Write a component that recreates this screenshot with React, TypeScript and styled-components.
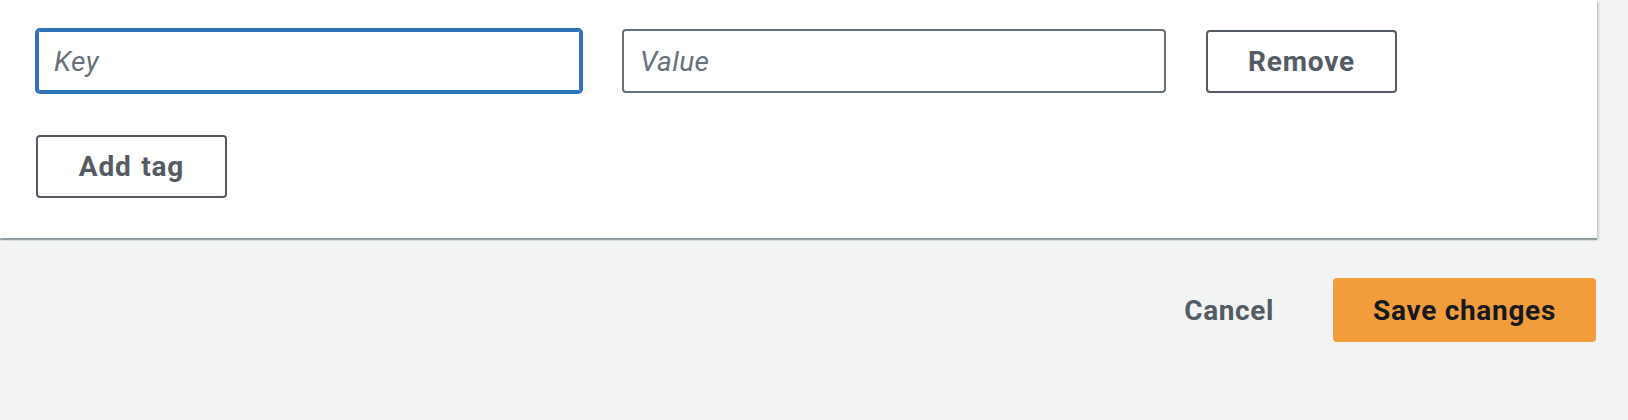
import React from "react";
import styled, { createGlobalStyle } from "styled-components";

const GlobalStyle = createGlobalStyle`
  html, body {
    margin: 0;
    padding: 0;
    background: #f2f3f3;
    font-family: Roboto, "Liberation Sans", Arial, sans-serif;
  }
  * { box-sizing: border-box; }
`;

const Page = styled.div`
  width: 1628px;
  padding-right: 31px;
`;

const Panel = styled.section`
  background: #ffffff;
  padding: 29px 0 40px 36px;
  box-shadow: 0 2px 1px 0 rgba(0, 28, 36, 0.32), 2px 2px 2px 0 rgba(0, 28, 36, 0.14);
`;

const TagRow = styled.div`
  display: grid;
  grid-template-columns: 546px 544px 191px;
  column-gap: 40px;
  align-items: center;
`;

const TextInput = styled.input<{ $focused?: boolean }>`
  height: 64px;
  width: 100%;
  border: 2px solid ${(p) => (p.$focused ? "#2f72b7" : "#687078")};
  border-radius: 4px;
  padding: 0 16px;
  font-family: inherit;
  font-size: 28px;
  letter-spacing: 0.4px;
  color: #16191f;
  background: #fff;
  outline: none;
  box-shadow: ${(p) =>
    p.$focused ? "0 0 0 1px #2f72b7, inset 0 0 0 1px #2f72b7" : "none"};
  &::placeholder {
    color: #687078;
    font-style: italic;
  }
`;

const NormalButton = styled.button`
  height: 63px;
  width: 191px;
  border: 2px solid #545b64;
  border-radius: 4px;
  background: #ffffff;
  color: #545b64;
  font-family: inherit;
  font-weight: 700;
  font-size: 28px;
  letter-spacing: 0.8px;
  word-spacing: 2px;
  cursor: pointer;
`;

const AddRow = styled.div`
  margin-top: 42px;
  display: flex;
`;

const Footer = styled.div`
  display: flex;
  justify-content: flex-end;
  align-items: center;
  gap: 20px;
  margin-top: 40px;
  padding-right: 1px;
`;

const LinkButton = styled.button`
  height: 64px;
  padding: 0 39px;
  border: none;
  background: transparent;
  color: #545b64;
  font-family: inherit;
  font-weight: 700;
  font-size: 28px;
  letter-spacing: 0.6px;
  cursor: pointer;
`;

const PrimaryButton = styled.button`
  height: 64px;
  padding: 0 40px;
  border: none;
  border-radius: 4px;
  background: #f29d3b;
  color: #16191f;
  font-family: inherit;
  font-weight: 700;
  font-size: 28px;
  letter-spacing: 0.7px;
  cursor: pointer;
`;

export default function App() {
  return (
    <Page>
      <GlobalStyle />
      <Panel>
        <TagRow>
          <TextInput $focused placeholder="Key" />
          <TextInput placeholder="Value" />
          <NormalButton>Remove</NormalButton>
        </TagRow>
        <AddRow>
          <NormalButton>Add tag</NormalButton>
        </AddRow>
      </Panel>
      <Footer>
        <LinkButton>Cancel</LinkButton>
        <PrimaryButton>Save changes</PrimaryButton>
      </Footer>
    </Page>
  );
}
